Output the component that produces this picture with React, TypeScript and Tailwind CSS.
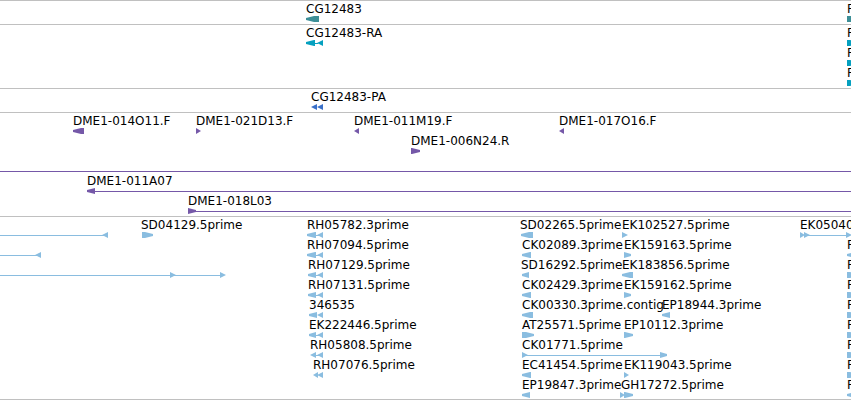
type Glyph = { from: number; to: number; dir: 'left' | 'right' };
type Span = { from: number; to: number | '100%' };
type Label = { x: number; text: string };
type Row = { labels?: Label[]; glyphs?: Glyph[]; spans?: Span[] };
type Track = { name: string; color: string; rows: Row[] };

const left = (from: number, to: number): Glyph => ({ from, to, dir: 'left' });
const right = (from: number, to: number): Glyph => ({ from, to, dir: 'right' });
const label = (x: number, text: string): Label => ({ x, text });
const span = (from: number, to: number | '100%'): Span => ({ from, to });

const tracks: Track[] = [
  {
    name: 'Genes',
    color: '#3d8f97',
    rows: [{ labels: [label(306, 'CG12483'), label(847, 'F')], glyphs: [left(306, 319), right(847, 863)] }],
  },
  {
    name: 'Transcripts',
    color: '#05a0bf',
    rows: [
      {
        labels: [label(306, 'CG12483-RA'), label(847, 'F')],
        glyphs: [left(306, 315), left(317, 323), right(847, 858)],
        spans: [span(314, 318)],
      },
      { labels: [label(847, 'F')], glyphs: [right(847, 858)] },
      { labels: [label(847, 'F')], glyphs: [right(847, 858)] },
    ],
  },
  {
    name: 'Proteins',
    color: '#3a70c8',
    rows: [{ labels: [label(311, 'CG12483-PA')], glyphs: [left(311, 317), left(317, 323)] }],
  },
  {
    name: 'BAC ends',
    color: '#7558a8',
    rows: [
      {
        labels: [
          label(73, 'DME1-014O11.F'),
          label(196, 'DME1-021D13.F'),
          label(354, 'DME1-011M19.F'),
          label(559, 'DME1-017O16.F'),
        ],
        glyphs: [left(73, 84), right(196, 201), left(354, 359), left(559, 564)],
      },
      { labels: [label(411, 'DME1-006N24.R')], glyphs: [right(411, 420)] },
      { spans: [span(0, '100%')] },
      { labels: [label(87, 'DME1-011A07')], glyphs: [left(87, 95)], spans: [span(95, '100%')] },
      { labels: [label(188, 'DME1-018L03')], glyphs: [right(188, 196)], spans: [span(194, '100%')] },
    ],
  },
  {
    name: 'ESTs',
    color: '#8abde0',
    rows: [
      {
        labels: [
          label(141, 'SD04129.5prime'),
          label(307, 'RH05782.3prime'),
          label(520, 'SD02265.5prime'),
          label(622, 'EK102527.5prime'),
          label(800, 'EK05040'),
        ],
        glyphs: [
          left(102, 108),
          right(142, 153),
          left(307, 316),
          left(317, 323),
          left(521, 533),
          right(622, 628),
          right(800, 805),
          right(804, 810),
          right(846, 852),
        ],
        spans: [span(0, 104), span(314, 319), span(808, 847)],
      },
      {
        labels: [
          label(307, 'RH07094.5prime'),
          label(522, 'CK02089.3prime'),
          label(624, 'EK159163.5prime'),
          label(847, 'F'),
        ],
        glyphs: [left(35, 41), left(307, 316), left(317, 323), left(522, 531), right(624, 631), left(847, 856)],
        spans: [span(0, 37), span(314, 319)],
      },
      {
        labels: [
          label(308, 'RH07129.5prime'),
          label(521, 'SD16292.5prime'),
          label(622, 'EK183856.5prime'),
          label(847, 'F'),
        ],
        glyphs: [
          right(170, 176),
          right(220, 226),
          left(308, 316),
          left(317, 323),
          left(522, 529),
          left(622, 633),
          right(847, 858),
        ],
        spans: [span(0, 221), span(314, 319)],
      },
      {
        labels: [
          label(308, 'RH07131.5prime'),
          label(522, 'CK02429.3prime'),
          label(624, 'EK159162.5prime'),
          label(847, 'F'),
        ],
        glyphs: [left(308, 316), left(317, 323), left(522, 531), right(624, 631), right(847, 858)],
        spans: [span(314, 319)],
      },
      {
        labels: [
          label(309, '346535'),
          label(522, 'CK00330.3prime.contig'),
          label(662, 'EP18944.3prime'),
          label(847, 'F'),
        ],
        glyphs: [left(309, 317), left(317, 323), left(522, 533), left(662, 670), right(847, 858)],
      },
      {
        labels: [
          label(309, 'EK222446.5prime'),
          label(522, 'AT25571.5prime'),
          label(624, 'EP10112.3prime'),
          label(847, 'F'),
        ],
        glyphs: [left(309, 316), left(317, 323), right(522, 534), right(624, 633), right(847, 858)],
        spans: [span(314, 319)],
      },
      {
        labels: [label(310, 'RH05808.5prime'), label(522, 'CK01771.5prime'), label(847, 'F')],
        glyphs: [left(310, 316), left(317, 323), right(522, 528), right(660, 667), right(847, 858)],
        spans: [span(314, 319), span(526, 661)],
      },
      {
        labels: [
          label(313, 'RH07076.5prime'),
          label(522, 'EC41454.5prime'),
          label(624, 'EK119043.5prime'),
          label(847, 'F'),
        ],
        glyphs: [left(313, 318), left(317, 323), left(522, 531), right(624, 629), right(847, 858)],
      },
      {
        labels: [label(522, 'EP19847.3prime'), label(621, 'GH17272.5prime'), label(847, 'F')],
        glyphs: [left(522, 530), right(620, 625), right(624, 633), left(847, 856)],
      },
    ],
  },
];

// a box with a point on the side the strand runs to, short ones are plain triangles
function glyphPoints({ from, to, dir }: Glyph) {
  const head = Math.min(8, to - from);
  const tip = to - from > 6 ? '2' : '3';
  const tipEnd = to - from > 6 ? '4' : '3';
  if (dir === 'left') {
    return `${to},0 ${from + head},0 ${from},${tip} ${from},${tipEnd} ${from + head},6 ${to},6`;
  }
  return `${from},0 ${to - head},0 ${to},${tip} ${to},${tipEnd} ${to - head},6 ${from},6`;
}

function TrackRow({ row, color }: { row: Row; color: string }) {
  return (
    <div className="relative flex h-5 flex-col">
      <div className="h-[13px]">
        {row.labels?.map((item) => (
          <span
            key={item.x}
            className="absolute top-0 text-[12px] leading-[12px] whitespace-nowrap"
            style={{ left: item.x }}
          >
            {item.text}
          </span>
        ))}
      </div>
      <svg className="block h-[6px] w-full" fill={color} aria-hidden="true">
        {row.spans?.map((item) => (
          <rect
            key={item.from}
            x={item.from}
            y="3"
            width={item.to === '100%' ? '100%' : item.to - item.from}
            height="1"
          />
        ))}
        {row.glyphs?.map((item) => (
          <polygon key={item.from} points={glyphPoints(item)} />
        ))}
      </svg>
    </div>
  );
}

export default function App() {
  return (
    <main className="w-full overflow-hidden border-b border-[#c0c0c0] bg-white font-['DejaVu_Sans',sans-serif] text-black">
      {tracks.map((track) => (
        <section
          key={track.name}
          aria-label={track.name}
          className="border-t border-[#c0c0c0] pt-[2px] pb-px last:pb-0"
        >
          {track.rows.map((row, i) => (
            <TrackRow key={i} row={row} color={track.color} />
          ))}
        </section>
      ))}
    </main>
  );
}
